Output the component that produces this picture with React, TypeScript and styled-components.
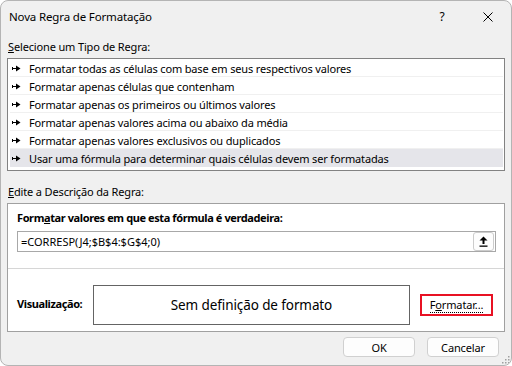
import React from "react";
import styled, { createGlobalStyle } from "styled-components";

const GlobalStyle = createGlobalStyle`
  html, body { margin: 0; padding: 0; background: #ffffff; }
  * { box-sizing: border-box; }
`;

const UI_FONT = `"Noto Sans", "Open Sans", sans-serif`;

const Window = styled.div`
  width: 512px;
  height: 366px;
  border: 1px solid #b4b4b4;
  border-radius: 8px;
  background: #f0f0f0;
  display: flex;
  flex-direction: column;
  font-family: ${UI_FONT};
  font-size: 11px;
  letter-spacing: -0.15px;
  color: #000;
  position: relative;
  overflow: hidden;
`;

const TitleBar = styled.div`
  height: 31px;
  flex: none;
  display: flex;
  align-items: flex-start;
  padding-left: 8px;
`;

const Title = styled.div`
  flex: 1;
  font-size: 11.5px;
  line-height: 16px;
  margin-top: 8px;
`;

const TitleButton = styled.div<{ $w: number }>`
  width: ${(p) => p.$w}px;
  height: 31px;
  display: flex;
  align-items: center;
  justify-content: center;
  font-size: 12px;
`;

const Body = styled.div`
  flex: 1;
  padding: 0 6px;
  display: flex;
  flex-direction: column;
`;

const SectionLabel = styled.div<{ $top: number }>`
  margin-top: ${(p) => p.$top}px;
  height: 16px;
  line-height: 16px;
  padding-left: 1px;
`;

const ListBox = styled.div`
  margin-top: 3px;
  height: 113px;
  flex: none;
  border: 1px solid #828282;
  background: #ffffff;
  padding: 0 1px 0 2px;
  display: flex;
  flex-direction: column;
`;

const ListRow = styled.div<{ $selected?: boolean }>`
  height: 18px;
  flex: none;
  display: flex;
  align-items: center;
  gap: 8px;
  padding: 2px 0 0 2px;
  line-height: 15px;
  border-bottom: 1px solid ${(p) => (p.$selected ? "#e5e5ea" : "#f0f0f0")};
  background: ${(p) => (p.$selected ? "#e5e5ea" : "transparent")};
  white-space: nowrap;
`;

const DescBox = styled.div`
  margin-top: 3px;
  height: 129px;
  flex: none;
  border: 1px solid #a0a0a0;
  background: #ffffff;
  display: flex;
  flex-direction: column;
`;

const TopSection = styled.div`
  height: 65px;
  flex: none;
  border-bottom: 1px solid #d6d6d6;
  padding: 6px 8px 0 9px;
  display: flex;
  flex-direction: column;
`;

const BoldLabel = styled.div`
  font-weight: 700;
  letter-spacing: -0.4px;
  height: 16px;
  line-height: 16px;
`;

const FormulaInput = styled.div`
  margin-top: 5px;
  height: 21px;
  border: 1px solid #a8a8a8;
  display: flex;
  align-items: center;
  justify-content: space-between;
  padding: 0 1px 0 3px;
`;

const FormulaText = styled.span`
  letter-spacing: 0;
  line-height: 19px;
`;

const CollapseButton = styled.div`
  width: 21px;
  height: 19px;
  border: 1px solid #cccccc;
  border-radius: 3px;
  background: #fdfdfd;
  display: flex;
  align-items: center;
  justify-content: center;
`;

const BottomSection = styled.div`
  flex: 1;
  display: flex;
  align-items: flex-start;
  padding: 16px 0 0 9px;
`;

const PreviewLabel = styled.div`
  font-weight: 700;
  letter-spacing: -0.4px;
  width: 76px;
  line-height: 16px;
  margin-top: 11px;
`;

const PreviewBox = styled.div`
  width: 317px;
  height: 40px;
  border: 1px solid #646464;
  display: flex;
  align-items: center;
  justify-content: center;
  font-size: 13.5px;
  letter-spacing: -0.1px;
`;

const FormatButton = styled.div`
  margin: 9px 0 0 10px;
  width: 73px;
  height: 22px;
  border: 2px solid #e81123;
  display: flex;
  align-items: center;
  justify-content: center;
  background: #ffffff;
`;

const FocusText = styled.span`
  border-bottom: 1px dotted #000;
  line-height: 14px;
`;

const Footer = styled.div`
  margin-top: 5px;
  display: flex;
  justify-content: flex-end;
  gap: 12px;
  padding-right: 6px;
`;

const DialogButton = styled.div`
  width: 72px;
  height: 20px;
  border: 1px solid #d0d0d0;
  border-radius: 4px;
  background: #fdfdfd;
  display: flex;
  align-items: center;
  justify-content: center;
  line-height: 15px;
`;

const Grip = styled.svg`
  position: absolute;
  right: 1px;
  bottom: 1px;
`;

const U = styled.span`
  text-decoration: underline;
  text-underline-offset: 1px;
`;

const Bullet = () => (
  <svg width="9" height="7" viewBox="0 0 9 7" style={{ flex: "none" }}>
    <rect x="0" y="2" width="1" height="3" fill="#000" />
    <rect x="0" y="3" width="5" height="1" fill="#000" />
    <path d="M4 0.5 L8.5 3.5 L4 6.5 Z" fill="#000" />
  </svg>
);

const rules = [
  "Formatar todas as células com base em seus respectivos valores",
  "Formatar apenas células que contenham",
  "Formatar apenas os primeiros ou últimos valores",
  "Formatar apenas valores acima ou abaixo da média",
  "Formatar apenas valores exclusivos ou duplicados",
  "Usar uma fórmula para determinar quais células devem ser formatadas",
];

export default function App() {
  return (
    <>
      <GlobalStyle />
      <Window>
        <TitleBar>
          <Title>Nova Regra de Formatação</Title>
          <TitleButton $w={46}>?</TitleButton>
          <TitleButton $w={46}>
            <svg width="10" height="10" viewBox="0 0 10 10">
              <path d="M0.5 0.5 L9.5 9.5 M9.5 0.5 L0.5 9.5" stroke="#000" strokeWidth="1" />
            </svg>
          </TitleButton>
        </TitleBar>
        <Body>
          <SectionLabel $top={7}>
            <U>S</U>elecione um Tipo de Regra:
          </SectionLabel>
          <ListBox>
            {rules.map((r, i) => (
              <ListRow key={r} $selected={i === rules.length - 1}>
                <Bullet />
                <span>{r}</span>
              </ListRow>
            ))}
          </ListBox>
          <SectionLabel $top={13}>
            <U>E</U>dite a Descrição da Regra:
          </SectionLabel>
          <DescBox>
            <TopSection>
              <BoldLabel>
                Form<U>a</U>tar valores em que esta fórmula é verdadeira:
              </BoldLabel>
              <FormulaInput>
                <FormulaText>=CORRESP(J4;$B$4:$G$4;0)</FormulaText>
                <CollapseButton>
                  <svg width="9" height="11" viewBox="0 0 9 11">
                    <path d="M4.5 0.5 L8.5 4.5 L5.5 4.5 L5.5 8 L3.5 8 L3.5 4.5 L0.5 4.5 Z" fill="#000" />
                    <rect x="0.5" y="9.5" width="8" height="1.3" fill="#000" />
                  </svg>
                </CollapseButton>
              </FormulaInput>
            </TopSection>
            <BottomSection>
              <PreviewLabel>Visualização:</PreviewLabel>
              <PreviewBox>Sem definição de formato</PreviewBox>
              <FormatButton>
                <FocusText>
                  F<U>o</U>rmatar...
                </FocusText>
              </FormatButton>
            </BottomSection>
          </DescBox>
          <Footer>
            <DialogButton>OK</DialogButton>
            <DialogButton>Cancelar</DialogButton>
          </Footer>
        </Body>
        <Grip width="10" height="10" viewBox="0 0 10 10">
          {[
            [8, 2], [8, 5], [5, 5], [8, 8], [5, 8], [2, 8],
          ].map(([x, y]) => (
            <rect key={`${x}-${y}`} x={x} y={y} width="1.5" height="1.5" fill="#a0a0a0" />
          ))}
        </Grip>
      </Window>
    </>
  );
}
